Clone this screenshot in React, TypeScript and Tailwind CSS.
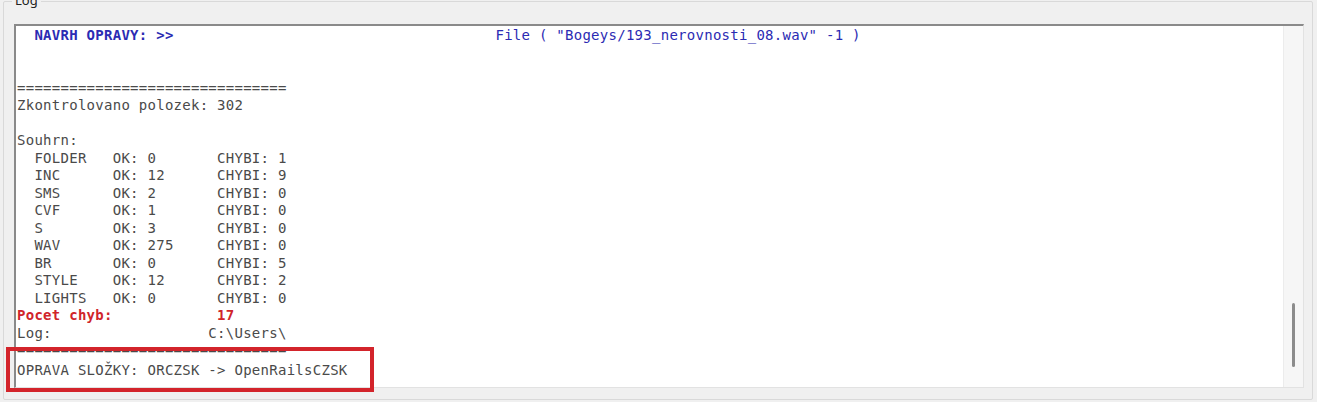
const mono = "font-['DejaVu_Sans_Mono','Liberation_Mono',monospace]";

const summary = [
  ["FOLDER", "0", "1"],
  ["INC", "12", "9"],
  ["SMS", "2", "0"],
  ["CVF", "1", "0"],
  ["S", "3", "0"],
  ["WAV", "275", "0"],
  ["BR", "0", "5"],
  ["STYLE", "12", "2"],
  ["LIGHTS", "0", "0"],
];

const Line = ({ children, className = "" }: { children?: React.ReactNode; className?: string }) => (
  <div className={`h-[17.5px] leading-[17.5px] whitespace-pre ${className}`}>{children ?? " "}</div>
);

const App = () => {
  return (
    <div className="w-[1317px] h-[402px] bg-[#f0f0f0] relative overflow-hidden">
      {/* GROUPBOX "Log" */}
      <div className="absolute left-[3px] top-[1px] w-[1310px] h-[399px] border border-[#d9d9d9] rounded-[2px] pl-[10px] pt-[22px] pr-[8px]">
        <span className="absolute left-[8px] top-[-10px] bg-[#f0f0f0] px-[3px] text-[13px] leading-[16px] text-[#222] font-['Noto_Sans',sans-serif]">
          Log
        </span>

        {/* TEXTBOX */}
        <div className="flex h-[364px] border-t-2 border-l-2 border-t-[#8a8a8a] border-l-[#8a8a8a] border-r border-b border-r-[#e2e2e2] border-b-[#e2e2e2] bg-white">
          <div className={`flex-1 pl-[1px] pt-[1px] text-[14px] tracking-[0.27px] text-[#4a4a4a] ${mono}`}>
            <Line className="font-bold text-[#2b2bb3]">
              {"  NAVRH OPRAVY: >>".padEnd(55)}
              <span className="font-normal">{"File ( \"Bogeys/193_nerovnosti_08.wav\" -1 )"}</span>
            </Line>
            <Line />
            <Line />
            <Line>===============================</Line>
            <Line>Zkontrolovano polozek: 302</Line>
            <Line />
            <Line>Souhrn:</Line>
            {summary.map(([name, ok, err]) => (
              <Line key={name}>
                {`  ${name.padEnd(9)}${`OK: ${ok}`.padEnd(12)}CHYBI: ${err}`}
              </Line>
            ))}
            <Line className="font-bold text-[#d0242a]">{"Pocet chyb:".padEnd(23) + "17"}</Line>
            <Line>{"Log:".padEnd(22) + "C:\\Users\\"}</Line>
            <Line>===============================</Line>
            <Line className="mt-[2px]">{"OPRAVA SLOŽKY: ORCZSK -> OpenRailsCZSK"}</Line>
          </div>

          {/* SCROLLBAR */}
          <div className="w-[20px] bg-[#f6f6f6] border-l border-[#ececec] flex flex-col justify-end items-center pb-[20px]">
            <div className="w-[3px] h-[64px] rounded-full bg-[#8c8c8c]" />
          </div>
        </div>
      </div>

      {/* RED HIGHLIGHT BOX */}
      <div className="absolute left-[6px] top-[347px] w-[368px] h-[45px] border-[4px] border-[#d3242b]" />
    </div>
  );
};

export default App;
